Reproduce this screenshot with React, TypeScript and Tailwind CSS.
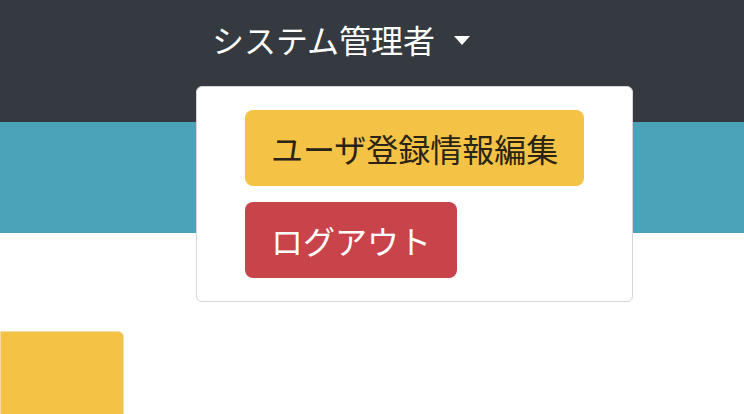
import React from "react";

const font = { fontFamily: '"Noto Sans CJK JP", "Noto Sans", sans-serif' };

export default function App() {
  return (
    <div
      className="relative w-[744px] h-[414px] overflow-hidden bg-white"
      style={font}
    >
      <nav className="h-[122px] bg-[#343a40] pl-[212px] pt-[15px]">
        <button className="flex items-center text-white text-[32px] leading-[48px]">
          システム管理者
          <span className="ml-[19px] mt-[2px] w-0 h-0 border-l-[8.5px] border-r-[8.5px] border-t-[9px] border-l-transparent border-r-transparent border-t-white" />
        </button>
      </nav>
      <div className="h-[111px] bg-[#4aa3b8]" />
      <div className="mt-[98px] w-[124px] h-[120px] bg-[#f4c244] border border-[#f1dca4] rounded-tr-[6px]" />

      <div className="absolute left-[196px] top-[86px] flex flex-col items-start gap-4 bg-white border border-[#d6d6d6] rounded-[6px] px-12 py-[23px]">
        <button className="px-[26px] py-[14px] rounded-[8px] bg-[#f4c244] text-[#2a2416] text-[32px] leading-[48px]">
          ユーザ登録情報編集
        </button>
        <button className="px-[26px] py-[14px] rounded-[8px] bg-[#c9434b] text-white text-[32px] leading-[48px]">
          ログアウト
        </button>
      </div>
    </div>
  );
}
